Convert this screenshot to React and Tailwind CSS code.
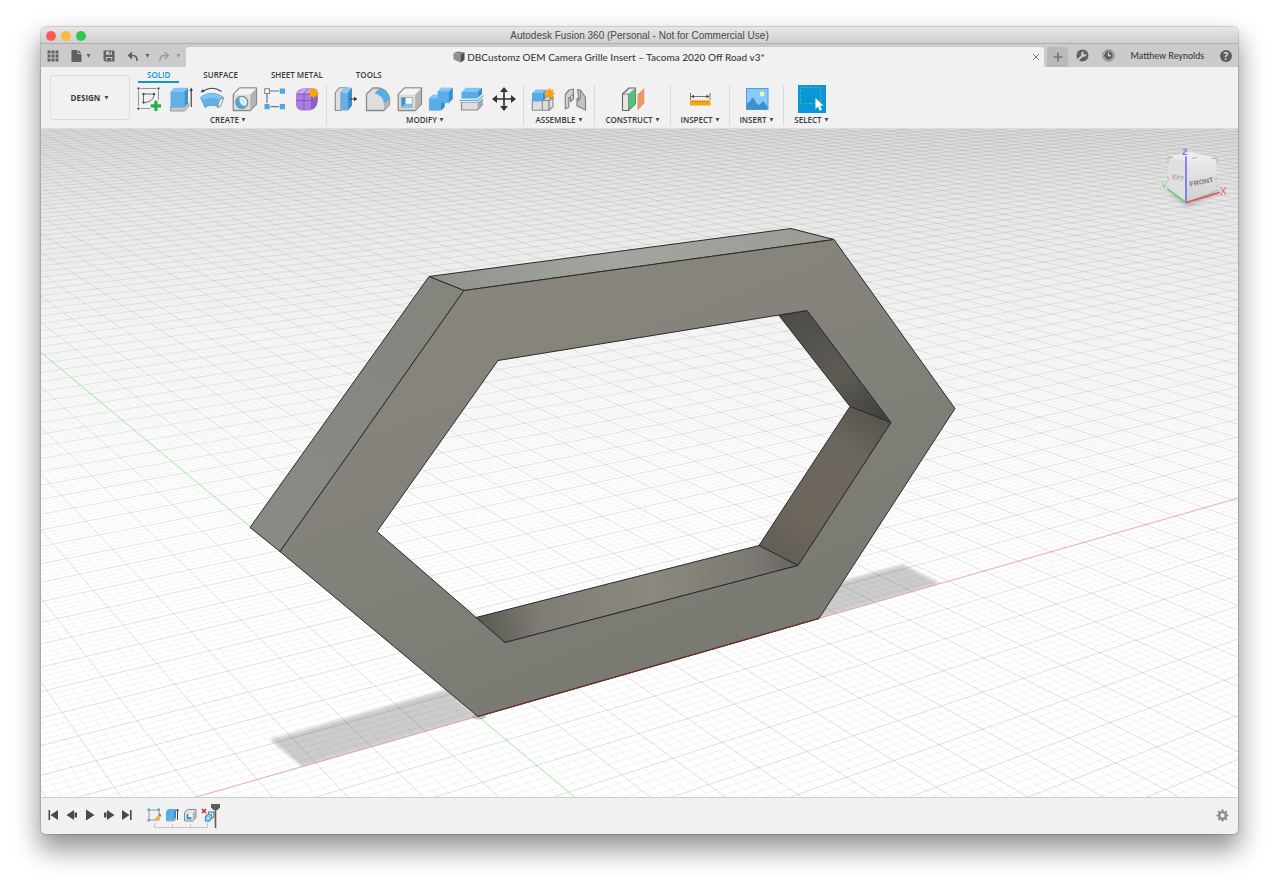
import React from "react";

/* ---------- small shared pieces ---------- */

function Caret({ className = "text-[#4a4a4a]" }) {
  return (
    <svg viewBox="0 0 6 5" className={`h-1 w-[5px] shrink-0 ${className}`} aria-hidden="true">
      <path d="M0.500 0h5L3 4.800z" fill="currentColor" />
    </svg>
  );
}

function Icon({ children, size = "size-7" }) {
  return (
    <svg viewBox="0 0 28 28" className={`block shrink-0 ${size}`} aria-hidden="true">
      {children}
    </svg>
  );
}

const burst = (cx, cy, r) =>
  Array.from({ length: 16 }, (_, i) => {
    const a = (i * Math.PI) / 8;
    const q = i % 2 ? r * 0.58 : r;
    return `${(cx + q * Math.cos(a)).toFixed(2)},${(cy + q * Math.sin(a)).toFixed(2)}`;
  }).join(" ");

/* ---------- ribbon icons ---------- */

const SketchIcon = () => (
  <Icon>
    <path d="M3.500 5.500V21M5.500 3.500H21.500M23.500 5.500V15M5.500 23.500H15" stroke="#8a8a8a" strokeWidth="0.900" fill="none" />
    <path d="M8.500 9h10.500M8.500 9v8.500M19 9c0 5-3.500 8-9.500 8.500" stroke="#666" strokeWidth="1" fill="none" />
    <path d="M2.500 2.500h2v2h-2zM22.500 2.500h2v2h-2zM2.500 22.500h2v2h-2zM7.500 8h2v2h-2zM18 8h2v2h-2zM7.500 16.500h2v2h-2z" fill="#444" />
    <path d="M19.300 15.700h3.200v3.600h3.600v3.200h-3.600v3.600h-3.200v-3.600h-3.600v-3.200h3.600z" fill="#27ae4c" />
  </Icon>
);

const ExtrudeIcon = () => (
  <Icon>
    <path d="M3.500 22h14l4-4v3.500L17.500 26h-14z" fill="#c9c9c9" stroke="#888" strokeWidth="0.800" />
    <path d="M3.500 6.500L7 2.700h14l-3.700 3.800z" fill="#7cc5f7" />
    <path d="M3.500 6.500h13.800V22H3.500z" fill="#62b0e8" />
    <path d="M17.300 6.500L21 2.700V18l-3.700 4z" fill="#3e8fcd" />
    <path d="M24.200 5.500V22" stroke="#333" strokeWidth="1.100" />
    <path d="M22.500 6h3.400L24.200 2.500z" fill="#333" />
  </Icon>
);

const RevolveIcon = () => (
  <Icon>
    <path d="M2.500 12.500C9 7 19 7 25.500 12.500L21 22.500C17 19.500 11 19.500 7 22.500z" fill="#62b0e8" stroke="#4a96cf" strokeWidth="0.800" />
    <path d="M2.500 12.500C9 7 19 7 25.500 12.500L21.500 15C17 12 11 12 5 15z" fill="#7cc5f7" />
    <path d="M25.500 12.500L23 21l-3.500 1.500 2-7.500z" fill="#f2f2f2" stroke="#888" strokeWidth="0.900" />
    <path d="M5 6C11 2.500 18 2.700 23.500 6.500" stroke="#444" strokeWidth="1.100" fill="none" />
    <path d="M2.500 7.300l4-.2-1.700-3z" fill="#444" />
  </Icon>
);

const GrayBlock = ({ children }) => (
  <Icon>
    <path d="M3.300 9.500L9.500 3h17v16l-6.300 6.500H3.300z" fill="#dedede" stroke="#8a8a8a" strokeWidth="1.300" strokeLinejoin="round" />
    <path d="M20.200 9.500L26 3.600v15.200l-5.800 6.200z" fill="#b4b4b4" />
    <path d="M4 9.500L9.800 3.600H26l-5.800 5.900z" fill="#f4f4f4" />
    {children}
  </Icon>
);

const HoleIcon = () => (
  <GrayBlock>
    <circle cx="11.800" cy="17.300" r="6" fill="#d3ecfb" stroke="#7d7d7d" strokeWidth="1.100" />
    <path d="M7 14a5.900 5.900 0 1 0 9.500 7C11 21 9 18 9.500 12z" fill="#4fa5e0" />
  </GrayBlock>
);

const PatternIcon = () => (
  <Icon>
    <path d="M9 6h9M6 9v9M9.500 21.700H18" stroke="#777" strokeWidth="1.200" fill="none" />
    <rect x="3.800" y="3.800" width="4.600" height="4.600" fill="#fff" stroke="#777" strokeWidth="1" />
    <path d="M18.800 3.500H24v5.200h-5.200zM3.500 19H8.700v5.200H3.500zM18.800 19H24v5.200h-5.200z" fill="#4fa8e3" />
  </Icon>
);

const FormIcon = () => (
  <Icon>
    <path d="M3 11Q3.200 4 11 3.300h9Q25 4 24.700 10v6Q24 24 16 25.500H9Q3.500 25 3 20z" fill="#ab7ddf" />
    <path d="M19 9q5-3 5.700 1v6q-1 7-6.500 9z" fill="#8f62c8" />
    <path d="M4 9q3-5 8-5.500h8q-1 4-4 5z" fill="#c7a4ef" />
    <path d="M3.200 15.500h16l5.500-4M11 8.500V25M3.500 9h15.200v14.500M11 8.500l4-5" stroke="#7d52b8" strokeWidth="0.800" fill="none" />
    <polygon points={burst(20.500, 8, 6)} fill="#f5a50f" />
  </Icon>
);

const PressPullIcon = () => (
  <Icon>
    <path d="M3.300 7.500L7.500 2.700h7L9 7.500v18H3.300z" fill="#dedede" stroke="#8a8a8a" strokeWidth="1.100" />
    <path d="M9 7.500h7v18H9z" fill="#62b0e8" />
    <path d="M9 7.500l4.500-5H20l-4 5z" fill="#84caf8" />
    <path d="M16 7.500l4-5v18l-4 5z" fill="#3b8cc8" />
    <path d="M17.500 14h5" stroke="#333" strokeWidth="1.200" />
    <path d="M22 11.800V16.200L25.300 14z" fill="#333" />
  </Icon>
);

const FilletIcon = () => (
  <Icon>
    <path d="M2.500 9L9 3h6q9 2 10.500 11v5.500L20 25.500H2.500z" fill="#dedede" stroke="#8a8a8a" strokeWidth="1.300" strokeLinejoin="round" />
    <path d="M10.500 8.500L15.500 3q9 2 10 13l-5.500 3Q19 10 10.500 8.500z" fill="#5aaee8" />
    <path d="M20 18.500l5.500-4.500v5.500L20 25.500z" fill="#b4b4b4" />
  </Icon>
);

const ShellIcon = () => (
  <GrayBlock>
    <path d="M6.300 12.500h11v10.200h-11z" fill="#f8f8f8" stroke="#999" strokeWidth="0.700" />
    <path d="M6.500 12.500l4 0v6.500l-4 3.500z" fill="#3d92d0" />
    <path d="M6.500 22.500l4-3.800h6.700v3.800z" fill="#78c2f5" />
  </GrayBlock>
);

const CombineIcon = () => (
  <Icon>
    <path d="M2.300 13.500L6 10h5V6.500L14.500 3H25.500v11l-3.700 3.800H17.500V22L14 25.300H2.300z" fill="#59ace5" stroke="#408fca" strokeWidth="0.700" strokeDasharray="1.500 1" />
    <path d="M11 6.500L14.500 3h11l-3.600 3.500zM2.300 13.500L6 10h5v3.500z" fill="#80c7f7" />
    <path d="M21.900 6.500L25.500 3v11l-3.600 3.700zM14 17.800h3.500V22L14 25.300z" fill="#3c8ecb" />
  </Icon>
);

const SplitIcon = () => (
  <Icon>
    <path d="M3.500 17h16.500l4-3v6l-4.500 5H3.500z" fill="#dedede" stroke="#8a8a8a" strokeWidth="1.200" />
    <path d="M19.500 17.500l4.500-3.500v6l-4.500 5z" fill="#a9a9a9" />
    <path d="M3.500 7h16v6.500h-16z" fill="#58abe4" />
    <path d="M3.500 7L8 2.700h16L19.500 7z" fill="#7cc5f7" />
    <path d="M19.500 7L24 2.700V9l-4.500 4.500z" fill="#3c8ecb" />
    <path d="M2 15.500h17.500l6-5" stroke="#fff" strokeWidth="3" fill="none" />
    <path d="M1.500 15.500H19.500L25.500 10.500" stroke="#57b0ea" strokeWidth="1.400" fill="none" />
  </Icon>
);

const MoveIcon = () => (
  <Icon>
    <path d="M14 5v18M5 14h18" stroke="#333" strokeWidth="1.700" />
    <path d="M14 2l4 5h-8zM14 26l4-5h-8zM2 14l5-4v8zM26 14l-5-4v8z" fill="#333" />
  </Icon>
);

const AssembleIcon = () => (
  <Icon>
    <path d="M3.300 15.500h10v9.800h-10zM13.300 15.500h6.500v9.800h-6.500zM13.300 15.500l3.500-3.500h7.500l-4 3.500zM20 15.500l4-3.500v9.500l-4 3.800z" fill="#dedede" stroke="#8a8a8a" strokeWidth="1.100" strokeLinejoin="round" />
    <path d="M3 8h10.500v8.500H3z" fill="#58abe4" />
    <path d="M3 8l3.500-3.500h10L13.500 8z" fill="#7cc5f7" />
    <path d="M13.500 8l3-3.500v9l-3 3z" fill="#3c8ecb" />
    <polygon points={burst(20.500, 8.500, 6)} fill="#f5a50f" />
  </Icon>
);

const JointIcon = () => (
  <Icon>
    <path d="M4.300 9.500L8 5l4.500-1v10l-3 2.500V12l-1.700 1v9l-3.500 2z" fill="#cfcfcf" stroke="#858585" strokeWidth="1.200" strokeLinejoin="round" />
    <path d="M16.500 4.500l3 .5 5 7.500V25l-8.500-4v-5l2-1z" fill="#c2c2c2" stroke="#858585" strokeWidth="1.200" strokeLinejoin="round" />
    <path d="M19.500 5v8.500l-3.500 2" stroke="#858585" strokeWidth="1" fill="none" />
    <path d="M10.500 10.500l2.500-1.500M15 14.500l3-1.500" stroke="#4fa8e3" strokeWidth="1.800" />
  </Icon>
);

const ConstructIcon = () => (
  <Icon>
    <path d="M3.500 9L10 3h6.500v15.500l-7 7h-6z" fill="#e6e6e6" stroke="#666" strokeWidth="1.100" strokeLinejoin="round" />
    <path d="M9.500 9L16.500 3v15.500l-7 7z" fill="#53c279" />
    <path d="M3.500 9h6v16.500" stroke="#777" strokeWidth="0.800" fill="none" />
    <path d="M18.500 9.500L25.300 3v15.500l-6.800 7z" fill="#e39a68" />
  </Icon>
);

const InspectIcon = () => (
  <Icon>
    <path d="M4 15.500h20.500v5H4z" fill="#f6a70d" />
    <path d="M6.500 15.500v2M9 15.500v1.500M11.500 15.500v2M14 15.500v1.500M16.500 15.500v2M19 15.500v1.500M21.500 15.500v2" stroke="#9c6d14" strokeWidth="0.700" />
    <path d="M4.500 8v7M24 8v7M5.500 11.500H23" stroke="#666" strokeWidth="0.900" />
    <path d="M5 11.500l3-1.800v3.600zM23.500 11.500l-3-1.800v3.600z" fill="#444" />
  </Icon>
);

const InsertIcon = () => (
  <Icon>
    <rect x="3.500" y="3.500" width="21.500" height="21" fill="#86cbf8" stroke="#4f9fd6" strokeWidth="1" />
    <path d="M4 18.500q2.500-.5 4-4 1.500-3.500 3.500 0 2 4.500 4 5.500 2-.5 3-2.500 1.500-2 3 0 1.500 2.500 3 3.500v3.300H4z" fill="#3e90cd" />
    <circle cx="19" cy="9" r="2.400" fill="#fdf3bd" />
  </Icon>
);

const SelectIcon = () => (
  <Icon>
    <rect width="28" height="28" fill="#0b96d8" />
    <rect x="2.500" y="2.500" width="20" height="16" fill="none" stroke="#3fc08a" strokeWidth="0.900" strokeDasharray="3 1.500" />
    <path d="M17.500 13v11l2.500-2.300 1.800 4 2.200-1-1.800-3.900H25.500z" fill="#fff" />
  </Icon>
);

/* ---------- window chrome ---------- */

function TitleBar() {
  return (
    <header className="grid h-[17px] shrink-0 grid-cols-[1fr_auto_1fr] items-center border-b border-[#aeaeae] bg-linear-to-b from-[#e6e6e6] to-[#cfcfcf] pt-px">
      <div className="flex gap-[5px] pl-[5px]">
        <button aria-label="Close" className="size-[10px] rounded-full bg-[#fc5b57]" />
        <button aria-label="Minimize" className="size-[10px] rounded-full bg-[#fbbb3f]" />
        <button aria-label="Zoom" className="size-[10px] rounded-full bg-[#34c84a]" />
      </div>
      <h1 className="font-['Liberation_Sans',sans-serif] text-[10px] leading-4 whitespace-nowrap text-[#484848]">
        Autodesk Fusion 360 (Personal - Not for Commercial Use)
      </h1>
      <div />
    </header>
  );
}

function TabBar() {
  return (
    <div className="flex h-[23px] shrink-0 items-stretch bg-[#cbcbcb] text-[#606060]">
      <div className="flex w-[145px] items-center gap-3 pl-[6px]">
        <button aria-label="Data panel">
          <svg viewBox="0 0 12 12" className="block size-3" fill="currentColor" aria-hidden="true">
            <path d="M0.500 0.500h3v3h-3zM4.500 0.500h3v3h-3zM8.500 0.500h3v3h-3zM0.500 4.500h3v3h-3zM4.500 4.500h3v3h-3zM8.500 4.500h3v3h-3zM0.500 8.500h3v3h-3zM4.500 8.500h3v3h-3zM8.500 8.500h3v3h-3z" />
          </svg>
        </button>
        <button aria-label="File" className="flex items-center gap-1">
          <svg viewBox="0 0 11 12" className="block h-3 w-[11px]" fill="currentColor" aria-hidden="true">
            <path d="M0.500 0h6v4h4v8h-10zM7.300 0l3.200 3.200H7.300z" />
          </svg>
          <Caret className="text-[#606060]" />
        </button>
        <button aria-label="Save">
          <svg viewBox="0 0 12 12" className="block size-3" fill="currentColor" aria-hidden="true">
            <path fillRule="evenodd" d="M0.500 0.500h11v11H2L0.500 10zM3 1.500v3.300h6V1.500H7.800v2.300H6.300V1.500zM2.800 7v3.500h1V8h4.400v2.500h1V7z" />
          </svg>
        </button>
        <div className="flex items-center gap-2">
          <button aria-label="Undo" className="flex items-center gap-[6px]">
            <svg viewBox="0 0 12 12" className="block size-3" aria-hidden="true">
              <path d="M2 5.500h4.500Q10.300 6 10 11" fill="none" stroke="currentColor" strokeWidth="1.700" />
              <path d="M5 1.500v8L0.500 5.500z" fill="currentColor" />
            </svg>
            <Caret className="text-[#606060]" />
          </button>
          <button aria-label="Redo" className="flex items-center gap-[6px] text-[#999]">
            <svg viewBox="0 0 12 12" className="block size-3" aria-hidden="true">
              <path d="M10 5.500H5.500Q1.700 6 2 11" fill="none" stroke="currentColor" strokeWidth="1.500" />
              <path d="M6.500 2L10.500 5.500 6.500 9" fill="none" stroke="currentColor" strokeWidth="1.400" />
            </svg>
            <Caret className="text-[#999]" />
          </button>
        </div>
      </div>

      <div className="mt-[3px] flex flex-1 items-center rounded-t-[3px] bg-[#f1f1f1] pr-1">
        <div className="flex flex-1 items-center justify-center gap-[2px]">
          <svg viewBox="0 0 12 12" className="block size-3" aria-hidden="true">
            <path d="M0.500 2L5 0.500l6.500 1L7.500 3z" fill="#777" />
            <path d="M0.500 2L7.500 3.200v8.300L0.500 8.500z" fill="#909090" />
            <path d="M7.500 3.200l4-1.700V9l-4 2.500z" fill="#4d4d4d" />
          </svg>
          <span className="font-['Lato','Noto_Sans',sans-serif] text-[10px] leading-4 font-medium whitespace-nowrap text-[#3c3c3c]">
            DBCustomz OEM Camera Grille Insert – Tacoma 2020 Off Road v3*
          </span>
        </div>
        <button aria-label="Close tab">
          <svg viewBox="0 0 8 8" className="block size-2" aria-hidden="true">
            <path d="M1 1l6 6M7 1L1 7" stroke="#777" strokeWidth="1" />
          </svg>
        </button>
      </div>

      <div className="flex w-[194px] items-center pl-[3px]">
        <button aria-label="New tab" className="mt-[3px] flex h-5 w-[21px] items-center justify-center rounded-t-[3px] bg-[#b9b9b9]">
          <svg viewBox="0 0 10 10" className="block size-[10px]" aria-hidden="true">
            <path d="M5 0.500v9M0.500 5h9" stroke="#777" strokeWidth="1.700" />
          </svg>
        </button>
        <div className="flex flex-1 items-center justify-between pr-[6px] pl-2">
          <button aria-label="Extensions">
            <svg viewBox="0 0 13 13" className="block size-[13px]" aria-hidden="true">
              <circle cx="6.500" cy="6.500" r="6" fill="#606060" />
              <path d="M2 11l4.500-4.500" stroke="#cbcbcb" strokeWidth="2" />
              <path d="M10.300 4.700A2.600 2.600 0 1 1 8.200 2.600L7.200 4.500l1.200 1.200z" fill="#cbcbcb" />
            </svg>
          </button>
          <button aria-label="Job status">
            <svg viewBox="0 0 13 13" className="block size-[13px]" aria-hidden="true">
              <circle cx="6.500" cy="6.500" r="5.700" fill="none" stroke="#777" strokeWidth="1" />
              <circle cx="6.500" cy="6.500" r="4.400" fill="#606060" />
              <path d="M6.500 3.500v3.300H9" stroke="#e4e4e4" strokeWidth="1.100" fill="none" />
            </svg>
          </button>
          <button className="px-[3px] font-['Lato','Noto_Sans',sans-serif] text-[9px] leading-4 font-medium whitespace-nowrap text-[#3c3c3c]">
            Matthew Reynolds
          </button>
          <button aria-label="Help" className="flex size-3 items-center justify-center rounded-full bg-[#5c5c5c] text-[10px] leading-3 font-bold text-[#e0e0e0]">
            ?
          </button>
        </div>
      </div>
    </div>
  );
}

/* ---------- ribbon ---------- */

const ribbonGroups = [
  {
    label: "CREATE",
    width: "w-[197px]",
    tools: [
      ["Create sketch", SketchIcon],
      ["Extrude", ExtrudeIcon],
      ["Revolve", RevolveIcon],
      ["Hole", HoleIcon],
      ["Rectangular pattern", PatternIcon],
      ["Create form", FormIcon],
    ],
  },
  {
    label: "MODIFY",
    width: "w-[197px]",
    tools: [
      ["Press pull", PressPullIcon],
      ["Fillet", FilletIcon],
      ["Shell", ShellIcon],
      ["Combine", CombineIcon],
      ["Split body", SplitIcon],
      ["Move", MoveIcon],
    ],
  },
  { label: "ASSEMBLE", width: "w-[71px]", tools: [["New component", AssembleIcon], ["Joint", JointIcon]] },
  { label: "CONSTRUCT", width: "w-[76px]", tools: [["Offset plane", ConstructIcon]] },
  { label: "INSPECT", width: "w-[59px]", tools: [["Measure", InspectIcon]] },
  { label: "INSERT", width: "w-[54px]", tools: [["Insert image", InsertIcon]] },
  { label: "SELECT", width: "w-[55px]", tools: [["Select", SelectIcon]] },
];

function Ribbon() {
  return (
    <div className="flex shrink-0 border-b border-[#dcdcdc] bg-[#f1f1f1] pl-[9px] text-[8px] leading-3 font-semibold text-[#3a3a3a]">
      <button className="my-2 flex w-20 items-center justify-center gap-1 rounded-[3px] border border-[#dcdcdc] font-bold">
        DESIGN <Caret />
      </button>
      <div className="flex flex-col">
        <nav className="flex gap-[15px] pl-2">
          <button className="border-b-2 border-[#0b96d8] px-[9px] pt-[2px] text-[#0b96d8]">SOLID</button>
          <button className="px-[9px]">SURFACE</button>
          <button className="px-[9px]">SHEET METAL</button>
          <button className="px-[9px]">TOOLS</button>
        </nav>
        <div className="flex pt-[2px]">
          {ribbonGroups.map((g, i) => (
            <section key={g.label} className={`flex flex-col pb-[2px] ${g.width}`}>
              <div
                className={`flex h-7 items-center px-[5px] ${g.tools.length > 1 ? "justify-between" : "justify-center"} ${
                  i < ribbonGroups.length - 1 ? "border-r border-[#dadada]" : ""
                }`}
              >
                {g.tools.map(([name, Tool]) => (
                  <button key={name} aria-label={name}>
                    <Tool />
                  </button>
                ))}
              </div>
              <button
                className={`flex items-center justify-center gap-[2px] pt-px ${
                  i < ribbonGroups.length - 1 ? "border-r border-[#dadada]" : ""
                }`}
              >
                {g.label} <Caret />
              </button>
            </section>
          ))}
        </div>
      </div>
    </div>
  );
}

/* ---------- 3D viewport ---------- */

const ORIGIN = [478, 716];
const VX = [3350, -108];
const VY = [-511, -108];
const STEP_X = 0.01783;
const STEP_Y = 0.028;

const towards = (v, t) => [(ORIGIN[0] + v[0] * t) / (1 + t), (ORIGIN[1] + v[1] * t) / (1 + t)];

/* Lines that recede to the left vanishing point. */
function lineAlongY(t) {
  const [px, py] = towards(VX, t);
  const at = (y) => VY[0] + ((px - VY[0]) * (y - VY[1])) / (py - VY[1]);
  return `M${at(800).toFixed(1)} 800L${at(125).toFixed(1)} 125`;
}

/* Lines that recede to the right vanishing point. */
function lineAlongX(t) {
  const [px, py] = towards(VY, t);
  const slope = (VX[1] - py) / (VX[0] - px);
  const at = (x) => py + slope * (x - px);
  return `M0 ${at(0).toFixed(1)}L1280 ${at(1280).toFixed(1)}`;
}

function gridPath(major) {
  const parts = [];
  for (let i = -45; i <= 385; i++) {
    if ((i % 5 === 0) === major) parts.push(lineAlongY((i * STEP_X) / 5));
  }
  for (let i = -50; i <= 410; i++) {
    if ((i % 5 === 0) === major) parts.push(lineAlongX((i * STEP_Y) / 5));
  }
  return parts.join("");
}

const MAJOR = gridPath(true);
const MINOR = gridPath(false);

function Viewport() {
  return (
    <main className="min-h-0 flex-1 bg-white">
      <svg
        viewBox="41 128 1197 669"
        preserveAspectRatio="xMidYMid slice"
        className="block h-full w-full font-['Liberation_Sans',sans-serif]"
        role="img"
        aria-label="Model of a hexagonal frame on the ground grid"
      >
        <defs>
          <linearGradient id="sky" x1="0" y1="128" x2="0" y2="797" gradientUnits="userSpaceOnUse">
            <stop offset="0" stopColor="#dcdcdc" />
            <stop offset="0.120" stopColor="#ebebeb" />
            <stop offset="0.300" stopColor="#f7f7f7" />
            <stop offset="0.550" stopColor="#fefefe" />
            <stop offset="0.700" stopColor="#fff" />
          </linearGradient>
          <linearGradient id="minor" x1="0" y1="128" x2="0" y2="797" gradientUnits="userSpaceOnUse">
            <stop offset="0" stopColor="#000" stopOpacity="0.004" />
            <stop offset="0.400" stopColor="#000" stopOpacity="0.020" />
            <stop offset="1" stopColor="#000" stopOpacity="0.050" />
          </linearGradient>
          <linearGradient id="major" x1="0" y1="128" x2="0" y2="797" gradientUnits="userSpaceOnUse">
            <stop offset="0" stopColor="#000" stopOpacity="0.080" />
            <stop offset="0.500" stopColor="#000" stopOpacity="0.100" />
            <stop offset="1" stopColor="#000" stopOpacity="0.130" />
          </linearGradient>
          <linearGradient id="front" x1="480" y1="290" x2="640" y2="700" gradientUnits="userSpaceOnUse">
            <stop offset="0" stopColor="#89857c" />
            <stop offset="0.450" stopColor="#82817a" />
            <stop offset="1" stopColor="#787971" />
          </linearGradient>
          <linearGradient id="top" x1="429" y1="0" x2="834" y2="0" gradientUnits="userSpaceOnUse">
            <stop offset="0" stopColor="#8f938c" />
            <stop offset="0.450" stopColor="#a1a59e" />
            <stop offset="1" stopColor="#999d96" />
          </linearGradient>
          <linearGradient id="left" x1="450" y1="280" x2="265" y2="540" gradientUnits="userSpaceOnUse">
            <stop offset="0" stopColor="#83857d" />
            <stop offset="1" stopColor="#888b84" />
          </linearGradient>
          <linearGradient id="floor" x1="476" y1="620" x2="798" y2="560" gradientUnits="userSpaceOnUse">
            <stop offset="0" stopColor="#595850" />
            <stop offset="0.200" stopColor="#7f7d75" />
            <stop offset="0.550" stopColor="#8a887f" />
            <stop offset="0.880" stopColor="#7a7870" />
            <stop offset="1" stopColor="#65635b" />
          </linearGradient>
          <linearGradient id="lowerRight" x1="880" y1="412" x2="775" y2="560" gradientUnits="userSpaceOnUse">
            <stop offset="0" stopColor="#55534c" />
            <stop offset="0.250" stopColor="#6b665e" />
            <stop offset="0.700" stopColor="#6d675e" />
            <stop offset="1" stopColor="#625e55" />
          </linearGradient>
          <linearGradient id="upperRight" x1="790" y1="312" x2="875" y2="420" gradientUnits="userSpaceOnUse">
            <stop offset="0" stopColor="#4d4c46" />
            <stop offset="0.600" stopColor="#5d5b54" />
            <stop offset="1" stopColor="#42413c" />
          </linearGradient>
          <linearGradient id="cubeFront" x1="0" y1="160" x2="0" y2="202" gradientUnits="userSpaceOnUse">
            <stop offset="0" stopColor="#e9e9e9" />
            <stop offset="1" stopColor="#cfcfcf" />
          </linearGradient>
          <filter id="soft" x="-10%" y="-10%" width="120%" height="120%">
            <feGaussianBlur stdDeviation="1.600" />
          </filter>
          <filter id="cubeShade" x="-30%" y="-60%" width="160%" height="220%">
            <feGaussianBlur stdDeviation="2.500" />
          </filter>
          <clipPath id="behindAxis">
            <path d="M41 128H1238V498L198 796.400H41z" />
          </clipPath>
        </defs>

        <rect x="0" y="100" width="1300" height="720" fill="url(#sky)" />
        <path d={MINOR} stroke="url(#minor)" strokeWidth="1" fill="none" />
        <path d={MAJOR} stroke="url(#major)" strokeWidth="1" fill="none" />

        <g clipPath="url(#behindAxis)">
          <g filter="url(#soft)" fill="#000" fillOpacity="0.200">
            <path d="M478 716L302 766 270 739 447 689z" />
            <path d="M819 618L940 583 903 564 830 584z" />
          </g>
        </g>
        <path d="M0 852.600L1300 479.700" stroke="#ff3b3b" strokeOpacity="0.320" strokeWidth="1" />
        <path d="M0 317.800L600 817.600" stroke="#55ff55" strokeOpacity="0.480" strokeWidth="1" />
        <ellipse cx="479" cy="716" rx="7" ry="3" fill="#9a9a9a" fillOpacity="0.600" />

        <g stroke="#2b2b28" strokeWidth="1" strokeLinejoin="round">
          <path d="M429 276L791 228 834 239 464 290z" fill="url(#top)" />
          <path d="M429 276L464 290 280 551 250 527z" fill="url(#left)" />
          <path d="M779 315L807 310 891 422 850 406z" fill="url(#upperRight)" />
          <path d="M850 406L891 422 798 565 759 545z" fill="url(#lowerRight)" />
          <path d="M476 617L759 545 798 565 505 642z" fill="url(#floor)" />
          <path
            fillRule="evenodd"
            d="M464 290L834 239 955 408 819 618 478 716 280 551zM498 360L377 531 505 642 798 565 891 422 807 310z"
            fill="url(#front)"
          />
        </g>
        <path d="M478 716L819 618" stroke="#7a2a28" strokeWidth="1.200" />

        <g>
          <path d="M1168 190L1187 206 1218 192 1214 186z" fill="#888" fillOpacity="0.600" filter="url(#cubeShade)" />
          <path d="M1168 157L1190 151 1217 158 1186 163z" fill="#ececec" />
          <path d="M1168 157L1186 160V202L1168 188z" fill="#dfdfdf" />
          <path d="M1186 160L1217 158 1216 190 1186 202z" fill="url(#cubeFront)" />
          <path d="M1168 163v-6h5M1192 158l5-1M1212 158h5v5M1168 176v4M1216 176v4" stroke="#a5a5a5" strokeWidth="0.800" fill="none" />
          <text x="1172" y="178" fontSize="6" fill="#8c8c8c" transform="rotate(14 1172 178)">EFT</text>
          <text x="1190" y="186" fontSize="7" fill="#777" fontWeight="bold" transform="rotate(-11 1190 186)">FRONT</text>
          <path d="M1186 202V156" stroke="#6c6cf0" strokeWidth="1.600" />
          <path d="M1186 202L1220 192" stroke="#e05555" strokeWidth="1.600" />
          <path d="M1186 202L1167 188" stroke="#55d455" strokeWidth="1.400" />
          <text x="1182" y="154" fontSize="9" fontWeight="bold" fill="#7a7af2">Z</text>
          <text x="1220" y="194" fontSize="10" fill="#e86060">X</text>
          <text x="1161" y="188" fontSize="9" fill="#6fe06f">Y</text>
        </g>
      </svg>
    </main>
  );
}

/* ---------- timeline ---------- */

const transport = [
  ["Go to start", "M1.500 1h1.600v10H1.500zM11 1v10L3.500 6z"],
  ["Step back", "M8 1v10L0.500 6zM8.500 3.500h2.500v5H8.500z"],
  ["Play", "M2 0.500v11L10.500 6z"],
  ["Step forward", "M4 1v10L11.500 6zM1 3.500h2.500v5H1z"],
  ["Go to end", "M9 1h1.600v10H9zM1 1v10L8.500 6z"],
];

const features = [
  [
    "Sketch",
    <React.Fragment key="s">
      <path d="M4 4H24V24H4z" fill="none" stroke="#8c8c8c" strokeWidth="1.800" />
      <path d="M1 1h5v5H1zM21 1h5v5h-5zM1 22h5v5H1z" fill="#4fa8e3" />
      <path d="M15 26l1-5 8-8 4 4-8 8z" fill="#f0b23c" />
      <path d="M23 13l2-2 4 4-2 2z" fill="#d4493f" />
    </React.Fragment>,
  ],
  [
    "Extrude",
    <React.Fragment key="e">
      <path d="M2 7l4-5h16l-4 5v17H2z" fill="#5aaee8" />
      <path d="M18 7l4-5v17l-4 5z" fill="#3c8ecb" />
      <path d="M2 24h16l4-4v3l-4 4H2z" fill="#aaa" />
      <path d="M25 4v20M23 6l2-4 2 4" stroke="#444" strokeWidth="2" fill="none" />
    </React.Fragment>,
  ],
  [
    "Shell",
    <React.Fragment key="h">
      <path d="M3 9l6-6h17v16l-6 7H3z" fill="#e3e3e3" stroke="#8a8a8a" strokeWidth="2" />
      <path d="M20 10l6-6v15l-6 7z" fill="#b0b0b0" />
      <path d="M7 12h10v11H7z" fill="#fff" />
      <path d="M7 12h4v6h6v5H7z" fill="#3f96d4" />
    </React.Fragment>,
  ],
  [
    "Remove",
    <React.Fragment key="r">
      <path d="M2 2l8 8M10 2l-8 8" stroke="#cf3333" strokeWidth="3.500" />
      <path d="M15 12v-4h11v10l-5 3" fill="none" stroke="#7a7a7a" strokeWidth="2.500" />
      <path d="M9 17l4-4h8v7l-4 6h-8z" fill="#bfe2f8" stroke="#3d92d0" strokeWidth="2.500" />
      <circle cx="14" cy="20" r="3" fill="#fff" stroke="#3d92d0" strokeWidth="1.500" />
    </React.Fragment>,
  ],
];

function Timeline() {
  return (
    <footer className="flex h-[37px] shrink-0 items-center border-t border-[#cdcdcd] bg-[#f1f1f1] pr-[9px] pb-[2px] pl-[6px]">
      <div className="flex w-[86px] justify-between">
        {transport.map(([name, d]) => (
          <button key={name} aria-label={name}>
            <svg viewBox="0 0 12 12" className="block size-3" aria-hidden="true">
              <path d={d} fill="#484848" />
            </svg>
          </button>
        ))}
      </div>
      <div className="relative ml-[14px] flex gap-1 pr-[13px]">
        {features.map(([name, art]) => (
          <button key={name} aria-label={name}>
            <Icon size="size-[14px]">{art}</Icon>
          </button>
        ))}
        <svg viewBox="0 0 76 30" className="pointer-events-none absolute -top-[5px] left-0 h-[30px] w-[76px]" aria-hidden="true">
          <path d="M7.500 20v4.500h53V20M25.500 21v3.500M43.500 21v3.500" fill="none" stroke="#c4c4c4" />
          <path d="M64 1h9v3.500L70.500 7h-4L64 4.500z" fill="#5d5d5d" />
          <path d="M68.500 6V25" stroke="#5d5d5d" strokeWidth="1.600" />
        </svg>
      </div>
      <button aria-label="Timeline settings" className="ml-auto">
        <svg viewBox="0 0 24 24" className="block size-[13px]" aria-hidden="true">
          <path
            d="M12 1v22M1 12h22M4.200 4.200l15.600 15.600M19.800 4.200L4.200 19.800"
            stroke="#8b8b8b"
            strokeWidth="4"
          />
          <circle cx="12" cy="12" r="6" fill="#f1f1f1" stroke="#8b8b8b" strokeWidth="4" />
        </svg>
      </button>
    </footer>
  );
}

export default function App() {
  return (
    <div className="flex h-screen flex-col bg-white px-[41px] pt-[27px] pb-[54px] font-['Open_Sans','Noto_Sans',sans-serif]">
      <div className="flex min-h-0 flex-1 flex-col overflow-hidden rounded-[5px] shadow-[0_0_1px_1px_rgba(0,0,0,0.16),0_14px_26px_2px_rgba(0,0,0,0.42)]">
        <TitleBar />
        <TabBar />
        <Ribbon />
        <Viewport />
        <Timeline />
      </div>
    </div>
  );
}
